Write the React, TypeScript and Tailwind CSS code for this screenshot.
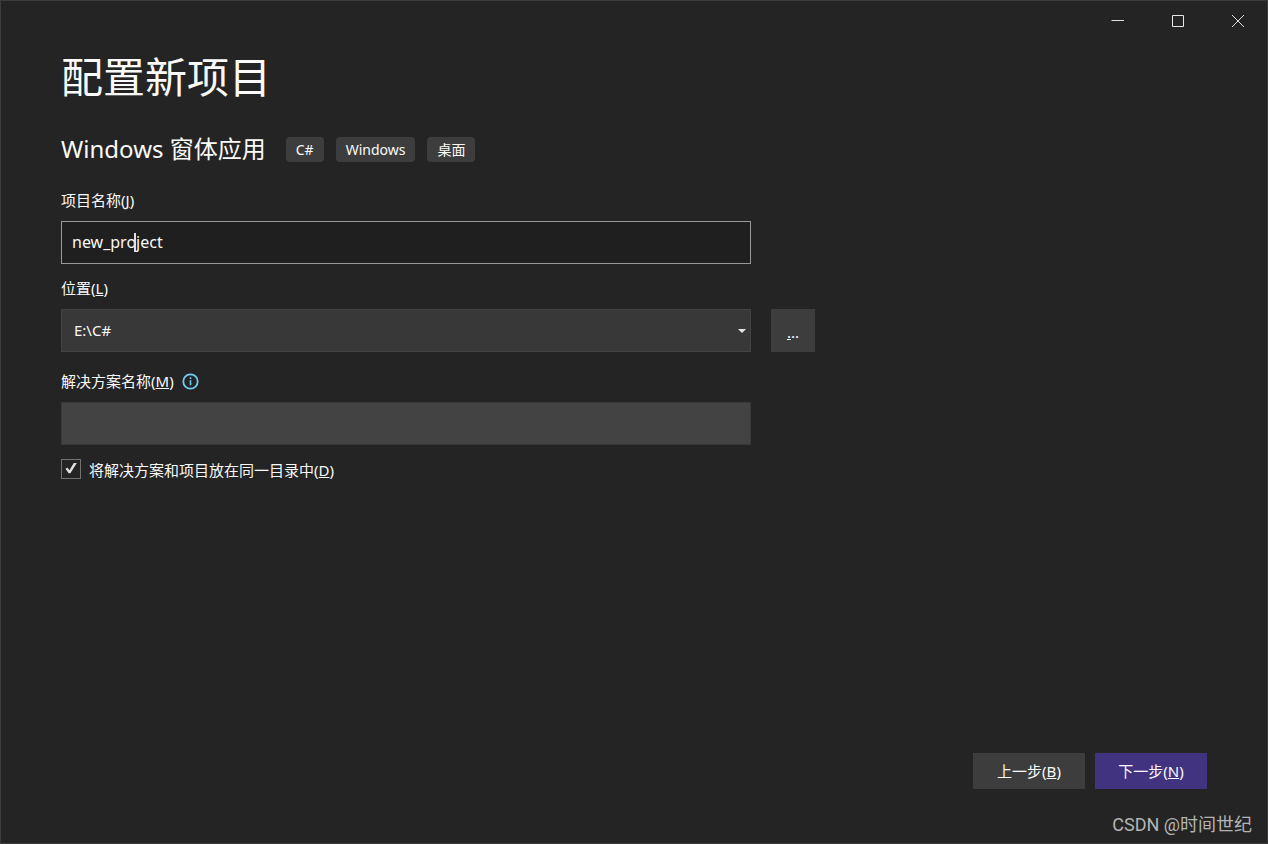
import { useState } from "react";

const tags = ["C#", "Windows", "桌面"];

export default function App() {
    const [projectName, setProjectName] = useState("new_project");
    const [location, setLocation] = useState("E:\\C#");
    const [sameFolder, setSameFolder] = useState(true);

    return (
        <div className="flex min-h-screen flex-col border border-[#3c3c3c] bg-[#242424] font-['Noto_Sans','Noto_Sans_CJK_SC',sans-serif] text-[15px] leading-5 text-[#fafafa]">
            {/* Title bar */}
            <header className="flex h-10 justify-end">
                <button aria-label="最小化" className="flex w-15 items-center justify-center">
                    <svg width="14" height="14" viewBox="0 0 14 14" stroke="#e0e0e0">
                        <path d="M1.5 6.5h13" />
                    </svg>
                </button>
                <button aria-label="最大化" className="flex w-15 items-center justify-center">
                    <svg width="14" height="14" viewBox="0 0 14 14" fill="none" stroke="#e6e6e6">
                        <path d="M2.5 1.5h11v11h-11z" />
                    </svg>
                </button>
                <button aria-label="关闭" className="flex w-15 items-center justify-center">
                    <svg width="14" height="14" viewBox="0 0 14 14" stroke="#e0e0e0">
                        <path d="M2 1l12 12M14 1L2 13" />
                    </svg>
                </button>
            </header>

            <main className="flex-1 px-15 pt-2">
                <h1 className="text-[42px] leading-14">配置新项目</h1>

                <div className="mt-[26px] flex h-9 items-center gap-3">
                    <h2 className="mr-2 text-2xl">Windows 窗体应用</h2>
                    {tags.map((tag) => (
                        <span key={tag} className="rounded bg-[#3d3d3d] px-2.5 pt-[3px] pb-0.5 text-sm leading-5">
                            {tag}
                        </span>
                    ))}
                </div>

                {/* Project name */}
                <label htmlFor="project-name" className="mt-[23px] block">
                    项目名称(<u>J</u>)
                </label>
                <div className="relative mt-[11px] max-w-[690px]">
                    <input
                        id="project-name"
                        value={projectName}
                        onChange={(e) => setProjectName(e.target.value)}
                        className="block h-[43px] w-full border border-[#999999] bg-[#1f1f1f] px-2.5 pb-0.5 text-base outline-none"
                    />
                    <span className="pointer-events-none absolute left-[73px] top-3 h-[19px] w-0.5 bg-[#e0e0e0]" />
                </div>

                {/* Location */}
                <label htmlFor="location" className="mt-3.5 block">
                    位置(<u>L</u>)
                </label>
                <div className="mt-[11px] flex gap-5">
                    <div className="relative max-w-[690px] flex-1">
                        <select
                            id="location"
                            value={location}
                            onChange={(e) => setLocation(e.target.value)}
                            className="block h-[43px] w-full appearance-none border border-[#434343] bg-[#383838] px-3 pb-0.5 outline-none"
                        >
                            <option>E:\C#</option>
                        </select>
                        <svg className="pointer-events-none absolute right-[5px] top-5" width="8" height="4" fill="#e6e6e6">
                            <path d="M0 0h8L4 4z" />
                        </svg>
                    </div>
                    <button aria-label="浏览" className="h-[43px] w-11 bg-[#3d3d3d] pt-0.5">
                        <u>.</u>..
                    </button>
                </div>

                {/* Solution name */}
                <div className="mt-[19px] flex items-center gap-2">
                    <label htmlFor="solution-name">
                        解决方案名称(<u>M</u>)
                    </label>
                    <svg width="17" height="17" viewBox="0 0 17 17" fill="none" stroke="#70cdef">
                        <circle cx="8.5" cy="8.5" r="7.2" strokeWidth="1.8" />
                        <path d="M8.5 7.3v5M8.5 4.3v1.6" strokeWidth="1.6" />
                    </svg>
                </div>
                <input
                    id="solution-name"
                    disabled={sameFolder}
                    className="mt-[11px] block h-[43px] w-full max-w-[690px] border border-[#383838] bg-[#434343] px-2.5"
                />

                <div className="mt-3.5 flex items-start gap-2">
                    <div className="relative size-5">
                        <input
                            id="same-folder"
                            type="checkbox"
                            checked={sameFolder}
                            onChange={(e) => setSameFolder(e.target.checked)}
                            className="block size-5 appearance-none border border-[#717171] bg-[#242424]"
                        />
                        {sameFolder && (
                            <svg
                                className="pointer-events-none absolute inset-0"
                                width="20"
                                height="20"
                                viewBox="0 0 20 20"
                                fill="#e0e0e0"
                            >
                                <path d="M4.5 9.8L6.4 8.6 8.4 11.2 12.8 4H15.8L9.4 14.2H7.6z" />
                            </svg>
                        )}
                    </div>
                    <label htmlFor="same-folder" className="pt-px">
                        将解决方案和项目放在同一目录中(<u>D</u>)
                    </label>
                </div>
            </main>

            <footer className="flex flex-col items-end">
                <div className="flex gap-2.5 px-15">
                    <button className="h-9 w-28 bg-[#3d3d3d]">
                        上一步(<u>B</u>)
                    </button>
                    <button className="h-9 w-28 bg-[#413380]">
                        下一步(<u>N</u>)
                    </button>
                </div>
                <p className="mt-6 mb-1.5 px-[15px] font-[Roboto,'Noto_Sans_CJK_SC',sans-serif] text-lg leading-6 text-[#b4b4b4]">
                    CSDN @时间世纪
                </p>
            </footer>
        </div>
    );
}
